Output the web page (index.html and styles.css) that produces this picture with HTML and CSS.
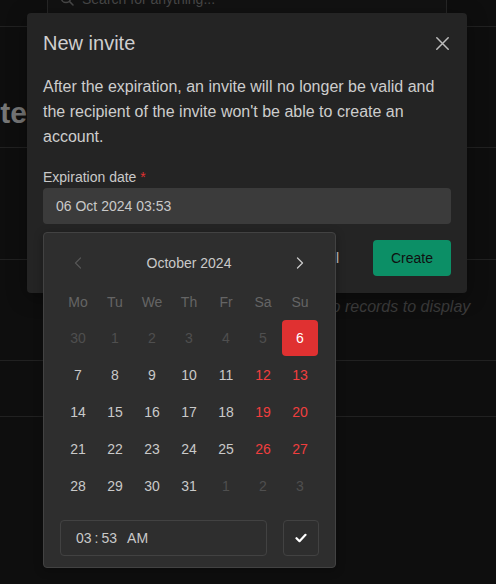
FILE: index.html
```html
<!DOCTYPE html>
<html lang="en">
<head>
<meta charset="utf-8">
<title>New invite</title>
<link rel="stylesheet" href="styles.css">
</head>
<body>
<div class="page">
  <header class="topbar">
    <div class="search">
      <svg class="search-icon" width="14" height="14" viewBox="0 0 14 14"><circle cx="6" cy="6" r="4.6" fill="none" stroke="currentColor" stroke-width="1.5"/><path d="M9.4 9.4L13 13" stroke="currentColor" stroke-width="1.5" stroke-linecap="round"/></svg>
      <span>Search for anything...</span>
    </div>
  </header>
  <section class="hero">
    <div class="title-clip"><h1 class="page-title">Invite</h1></div>
  </section>
  <section class="toolbar"></section>
  <section class="empty"><span>No records to display</span></section>
  <section class="footer-row"></section>
</div>

<div class="modal">
  <div class="modal-header">
    <h2 class="modal-title">New invite</h2>
    <button class="close-btn" aria-label="Close">
      <svg width="13" height="13" viewBox="0 0 13 13"><path d="M0.8 0.8L12.2 12.2M12.2 0.8L0.8 12.2" stroke="currentColor" stroke-width="1.5" stroke-linecap="round"/></svg>
    </button>
  </div>
  <div class="modal-body">
    <p class="desc">After the expiration, an invite will no longer be valid and the recipient of the invite won't be able to create an account.</p>
    <label class="field-label">Expiration date <span class="req">*</span></label>
    <div class="input">06 Oct 2024 03:53</div>
    <div class="actions">
      <button class="btn btn-cancel">Cancel</button>
      <button class="btn btn-create">Create</button>
    </div>
  </div>
</div>

<div class="popover">
  <div class="cal-header">
    <button class="cal-ctrl dim" aria-label="Previous month">
      <svg width="8" height="12" viewBox="0 0 8 12"><path d="M6.5 1L1.5 6L6.5 11" fill="none" stroke="currentColor" stroke-width="1.3" stroke-linecap="round" stroke-linejoin="round"/></svg>
    </button>
    <div class="cal-label">October 2024</div>
    <button class="cal-ctrl" aria-label="Next month">
      <svg width="8" height="12" viewBox="0 0 8 12"><path d="M1.5 1L6.5 6L1.5 11" fill="none" stroke="currentColor" stroke-width="1.3" stroke-linecap="round" stroke-linejoin="round"/></svg>
    </button>
  </div>
  <div class="weekdays">
    <div>Mo</div><div>Tu</div><div>We</div><div>Th</div><div>Fr</div><div>Sa</div><div>Su</div>
  </div>
  <div class="days">
    <div class="day off">30</div><div class="day off">1</div><div class="day off">2</div><div class="day off">3</div><div class="day off">4</div><div class="day off">5</div><div class="day selected">6</div>
    <div class="day">7</div><div class="day">8</div><div class="day">9</div><div class="day">10</div><div class="day">11</div><div class="day weekend">12</div><div class="day weekend">13</div>
    <div class="day">14</div><div class="day">15</div><div class="day">16</div><div class="day">17</div><div class="day">18</div><div class="day weekend">19</div><div class="day weekend">20</div>
    <div class="day">21</div><div class="day">22</div><div class="day">23</div><div class="day">24</div><div class="day">25</div><div class="day weekend">26</div><div class="day weekend">27</div>
    <div class="day">28</div><div class="day">29</div><div class="day">30</div><div class="day">31</div><div class="day off">1</div><div class="day off">2</div><div class="day off">3</div>
  </div>
  <div class="time-row">
    <div class="time-input"><span>03</span><span class="colon">:</span><span>53</span><span class="ampm">AM</span></div>
    <button class="check-btn" aria-label="Confirm">
      <svg width="12" height="10" viewBox="0 0 12 10"><path d="M1.5 5.2L4.5 8.2L10.5 1.8" fill="none" stroke="currentColor" stroke-width="2.2" stroke-linecap="round" stroke-linejoin="round"/></svg>
    </button>
  </div>
</div>
</body>
</html>
```

FILE: styles.css
```css
* { box-sizing: border-box; }
html, body { margin: 0; padding: 0; }
body {
  width: 496px;
  height: 584px;
  overflow: hidden;
  position: relative;
  background: #0e0e0e;
  font-family: "Liberation Sans", Arial, sans-serif;
  color: #c9c9c9;
}
button { font-family: inherit; }

/* background page */
.topbar {
  height: 27px;
  border-bottom: 1px solid #212121;
  padding-left: 47px;
  display: flex;
  align-items: flex-start;
}
.search {
  width: 400px;
  height: 36px;
  margin-top: -19px;
  border: 1px solid #262626;
  border-radius: 4px;
  background: #121212;
  display: flex;
  align-items: center;
  gap: 8px;
  padding-left: 12px;
  color: #474747;
  font-size: 14px;
  flex: none;
}
.search-icon { flex: none; }
.hero {
  height: 121px;
  border-bottom: 1px solid #212121;
  padding-top: 71px;
}
.title-clip {
  width: 27px;
  overflow: hidden;
  display: flex;
  justify-content: flex-end;
}
.page-title {
  margin: 0;
  font-size: 30px;
  line-height: 30px;
  font-weight: 700;
  color: #767676;
  white-space: nowrap;
  flex: none;
}
.toolbar {
  height: 112px;
  border-bottom: 1px solid #212121;
}
.empty {
  height: 101px;
  border-bottom: 1px solid #212121;
  display: flex;
  align-items: center;
  padding-left: 320px;
  padding-bottom: 6px;
  font-size: 16px;
  font-style: italic;
  color: #3b3b3b;
  white-space: nowrap;
}
.footer-row {
  height: 56px;
  border-bottom: 1px solid #212121;
}

/* modal */
.modal {
  position: absolute;
  left: 27px;
  top: 13px;
  width: 440px;
  background: #242424;
  border-radius: 4px;
  box-shadow: 0 4px 20px rgba(0,0,0,0.35);
}
.modal-header {
  height: 61px;
  padding: 0 16px;
  display: flex;
  align-items: center;
  justify-content: space-between;
}
.modal-title {
  margin: 0;
  font-size: 20px;
  font-weight: 400;
  color: #cfcfcf;
}
.close-btn {
  width: 18px;
  height: 18px;
  padding: 0;
  border: 0;
  background: transparent;
  color: #bdbdbd;
  display: flex;
  align-items: center;
  justify-content: center;
}
.modal-body { padding: 0 16px 17px; }
.desc {
  margin: 0;
  font-size: 16px;
  line-height: 25px;
  color: #cdcdcd;
}
.field-label {
  display: block;
  margin-top: 17px;
  font-size: 14px;
  line-height: 22px;
  color: #c9c9c9;
}
.req { color: #e03131; }
.input {
  height: 36px;
  background: #3b3b3b;
  border-radius: 4px;
  padding-left: 13px;
  display: flex;
  align-items: center;
  font-size: 14px;
  color: #c9c9c9;
}
.actions {
  margin-top: 16px;
  display: flex;
  justify-content: flex-end;
  gap: 16px;
}
.btn {
  height: 36px;
  padding: 0 18px;
  border: 0;
  border-radius: 4px;
  font-size: 14px;
}
.btn-cancel { background: transparent; color: #c9c9c9; }
.btn-create { background: #0c8f66; color: #101010; width: 78px; padding: 0; }

/* calendar popover */
.popover {
  position: absolute;
  left: 43px;
  top: 232px;
  width: 293px;
  background: #2e2e2e;
  border: 1px solid #424242;
  border-radius: 4px;
  padding: 12px 16px 11px;
  box-shadow: 0 2px 10px rgba(0,0,0,0.3);
}
.cal-header {
  height: 36px;
  display: flex;
  align-items: center;
  margin-bottom: 10px;
  width: 258px;
}
.cal-ctrl {
  width: 36px;
  height: 36px;
  padding: 0;
  border: 0;
  background: transparent;
  color: #c9c9c9;
  display: flex;
  align-items: center;
  justify-content: center;
}
.cal-ctrl.dim { color: #555; }
.cal-label {
  flex: 1;
  text-align: center;
  font-size: 14px;
  color: #c9c9c9;
}
.weekdays, .days {
  display: grid;
  grid-template-columns: repeat(7, 36px);
  column-gap: 1px;
}
.weekdays div {
  text-align: center;
  font-size: 14px;
  line-height: 22px;
  padding-bottom: 7px;
  color: #656565;
}
.days { row-gap: 1px; }
.day {
  height: 36px;
  display: flex;
  align-items: center;
  justify-content: center;
  font-size: 14px;
  color: #c9c9c9;
  border-radius: 4px;
}
.day.off { color: #4f4f4f; }
.day.weekend { color: #f03e3e; }
.day.selected { background: #e03131; color: #ffffff; }
.time-row {
  margin-top: 16px;
  display: flex;
  gap: 16px;
}
.time-input {
  flex: 1;
  height: 36px;
  border: 1px solid #424242;
  border-radius: 4px;
  display: flex;
  align-items: center;
  padding-left: 15px;
  font-size: 14px;
  color: #c9c9c9;
}
.colon { margin: 0 3px 0 3px; }
.ampm { margin-left: 10px; }
.check-btn {
  width: 36px;
  height: 36px;
  padding: 0;
  border: 1px solid #424242;
  border-radius: 4px;
  background: transparent;
  color: #ffffff;
  display: flex;
  align-items: center;
  justify-content: center;
}
```
